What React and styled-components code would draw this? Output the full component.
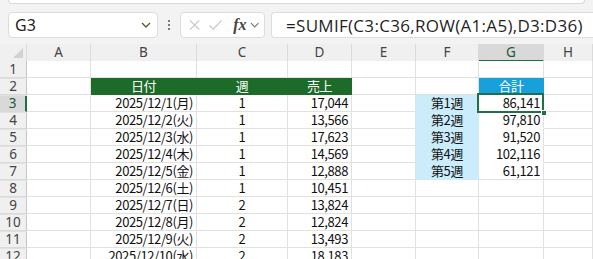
import React from "react";
import styled, { createGlobalStyle } from "styled-components";

const GlobalStyle = createGlobalStyle`
  html, body {
    margin: 0;
    padding: 0;
    background: #f3f3f3;
  }
  * {
    box-sizing: border-box;
  }
`;

const COLS = "27px 64px 106px 91px 64px 64px 63px 65px 1fr";
const CELL_FONT = `"Noto Sans CJK JP", "Noto Sans", sans-serif`;
const UI_FONT = `"Noto Sans", "Noto Sans CJK JP", sans-serif`;

const sales = [
  ["2025/12/1(月)", 1, "17,044"],
  ["2025/12/2(火)", 1, "13,566"],
  ["2025/12/3(水)", 1, "17,623"],
  ["2025/12/4(木)", 1, "14,569"],
  ["2025/12/5(金)", 1, "12,888"],
  ["2025/12/6(土)", 1, "10,451"],
  ["2025/12/7(日)", 2, "13,824"],
  ["2025/12/8(月)", 2, "12,824"],
  ["2025/12/9(火)", 2, "13,493"],
  ["2025/12/10(水)", 2, "18,183"],
];

const totals = [
  ["第1週", "86,141"],
  ["第2週", "97,810"],
  ["第3週", "91,520"],
  ["第4週", "102,116"],
  ["第5週", "61,121"],
];

function App() {
  const letters = ["A", "B", "C", "D", "E", "F", "G", "H"];

  return (
    <Root>
      <GlobalStyle />
      <RibbonEdge />
      <FormulaBar>
        <NameBox>
          <span>G3</span>
          <Chevron viewBox="0 0 10 6" $color="#5a5a2a">
            <path d="M1 1 L5 5 L9 1" />
          </Chevron>
        </NameBox>
        <Dots>
          <i />
          <i />
          <i />
        </Dots>
        <FxBox>
          <svg width="14" height="14" viewBox="0 0 14 14">
            <path d="M2 2 L12 12 M12 2 L2 12" stroke="#c4c4c4" strokeWidth="1.2" fill="none" />
          </svg>
          <svg width="16" height="14" viewBox="0 0 16 14">
            <path d="M1.5 7.5 L5.5 11.5 L14.5 2" stroke="#c4c4c4" strokeWidth="1.2" fill="none" />
          </svg>
          <Fx>fx</Fx>
          <Chevron viewBox="0 0 10 6" $color="#7a7a7a">
            <path d="M1 1 L5 5 L9 1" />
          </Chevron>
        </FxBox>
        <FormulaInput>=SUMIF(C3:C36,ROW(A1:A5),D3:D36)</FormulaInput>
      </FormulaBar>

      <Sheet>
        <Row>
          <Corner>
            <svg width="10" height="10" viewBox="0 0 10 10">
              <path d="M10 0 L10 10 L0 10 Z" fill="#d2d2d2" />
            </svg>
          </Corner>
          {letters.map((l) => (
            <ColHead key={l} $active={l === "G"}>
              {l}
            </ColHead>
          ))}
          <ColHead />
        </Row>

        {Array.from({ length: 12 }, (_, i) => {
          const r = i + 1;
          const d = r >= 3 ? sales[r - 3] : null;
          const t = r >= 3 && r <= 7 ? totals[r - 3] : null;
          return (
            <Row key={r}>
              <RowHead $active={r === 3}>{r}</RowHead>
              <Cell />
              {r === 2 ? (
                <>
                  <Cell $fill="#1d6b28" $align="center" $color="#fff">日付</Cell>
                  <Cell $fill="#1d6b28" $align="center" $color="#fff">週</Cell>
                  <Cell $fill="#1d6b28" $align="center" $color="#fff">売上</Cell>
                </>
              ) : (
                <>
                  <Cell $align="right">{d && d[0]}</Cell>
                  <Cell $align="center">{d && d[1]}</Cell>
                  <Cell $align="right">{d && d[2]}</Cell>
                </>
              )}
              <Cell />
              {t ? (
                <Cell $fill="#cbecfa" $align="center">{t[0]}</Cell>
              ) : (
                <Cell />
              )}
              {r === 2 ? (
                <Cell $fill="#17a0da" $align="center" $color="#fff">合計</Cell>
              ) : t ? (
                <SpillCell $align="right" $last={r === 7}>
                  {r === 3 && (
                    <>
                      <SpillOutline />
                      <ActiveCell>
                        <Handle />
                      </ActiveCell>
                    </>
                  )}
                  {t[1]}
                </SpillCell>
              ) : (
                <Cell />
              )}
              <Cell />
              <Cell />
            </Row>
          );
        })}
      </Sheet>
    </Root>
  );
}

const Root = styled.div`
  width: 593px;
  height: 259px;
  overflow: hidden;
  background: #f3f3f3;
  display: flex;
  flex-direction: column;
`;

const RibbonEdge = styled.div`
  flex: none;
  height: 4px;
  margin: 0 8px;
  background: #fff;
  border: 1px solid #d9d9d9;
  border-top: none;
  border-radius: 0 0 6px 6px;
`;

const FormulaBar = styled.div`
  flex: none;
  height: 40px;
  display: flex;
  align-items: center;
  padding: 2px 0 0 8px;
`;

const NameBox = styled.div`
  width: 150px;
  height: 26px;
  background: #fff;
  border: 1px solid #dcdcdc;
  border-radius: 4px;
  display: flex;
  align-items: center;
  justify-content: space-between;
  padding: 0 6px 0 6px;
  font-family: ${UI_FONT};
  font-size: 16px;
  color: #1f1f1f;
`;

const Chevron = styled.svg`
  width: 10px;
  height: 6px;
  fill: none;
  stroke: ${(p) => p.$color};
  stroke-width: 1.3;
`;

const Dots = styled.div`
  width: 22px;
  display: flex;
  flex-direction: column;
  align-items: center;
  gap: 2px;

  i {
    width: 2px;
    height: 2px;
    background: #555;
    border-radius: 1px;
  }
`;

const FxBox = styled.div`
  width: 85px;
  height: 26px;
  background: #fff;
  border: 1px solid #dcdcdc;
  border-radius: 4px;
  display: flex;
  align-items: center;
  gap: 7px;
  padding: 0 5px 0 7px;
`;

const Fx = styled.span`
  font-family: "Liberation Serif", serif;
  font-style: italic;
  font-weight: bold;
  font-size: 16px;
  color: #444;
  margin-left: 3px;
  margin-right: -4px;
`;

const FormulaInput = styled.div`
  flex: 1;
  height: 26px;
  margin-left: 6px;
  background: #fff;
  border: 1px solid #dcdcdc;
  border-right: none;
  border-radius: 4px 0 0 4px;
  display: flex;
  align-items: center;
  padding-left: 14px;
  font-family: "Open Sans", sans-serif;
  font-size: 17px;
  letter-spacing: 0.3px;
  color: #1f1f1f;
  white-space: nowrap;
  overflow: hidden;
`;

const Sheet = styled.div`
  flex: 1;
  min-height: 0;
  overflow: hidden;
  background: #fff;
  display: flex;
  flex-direction: column;
`;

const Row = styled.div`
  display: grid;
  grid-template-columns: ${COLS};
  height: 17px;
  flex: none;
`;

const Corner = styled.div`
  background: #f0f0f0;
  border-right: 1px solid #dadada;
  border-bottom: 1px solid #bdbdbd;
  display: flex;
  align-items: flex-end;
  justify-content: flex-end;
  padding: 0 3px 3px 0;
`;

const ColHead = styled.div`
  background: ${(p) => (p.$active ? "#d9d9d9" : "#f0f0f0")};
  border-right: 1px solid #dadada;
  border-bottom: ${(p) => (p.$active ? "2px solid #1e7145" : "1px solid #bdbdbd")};
  font-family: ${UI_FONT};
  font-size: 13.5px;
  line-height: 16px;
  color: ${(p) => (p.$active ? "#1e5a36" : "#444")};
  text-align: center;
`;

const RowHead = styled.div`
  background: ${(p) => (p.$active ? "#d9d9d9" : "#f0f0f0")};
  border-right: ${(p) => (p.$active ? "2px solid #1e7145" : "1px solid #c6c6c6")};
  border-bottom: 1px solid #dadada;
  font-family: ${UI_FONT};
  font-size: 13.5px;
  line-height: 16px;
  color: ${(p) => (p.$active ? "#1e5a36" : "#444")};
  text-align: center;
`;

const Cell = styled.div`
  position: relative;
  background: ${(p) => p.$fill || "#fff"};
  border-right: 1px solid ${(p) => p.$fill || "#e1e1e1"};
  border-bottom: 1px solid ${(p) => p.$fill || "#e1e1e1"};
  font-family: ${CELL_FONT};
  font-size: 13px;
  letter-spacing: -0.4px;
  line-height: 16px;
  color: ${(p) => p.$color || "#111"};
  text-align: ${(p) => p.$align || "left"};
  padding: 0 3px;
  white-space: nowrap;
`;

const SpillCell = styled(Cell)`
  border-bottom-color: ${(p) => (p.$last ? "#e1e1e1" : "#fff")};
`;

const SpillOutline = styled.div`
  position: absolute;
  left: -1px;
  top: -1px;
  width: 65px;
  height: 86px;
  border: 1px solid #4a6db8;
  pointer-events: none;
`;

const ActiveCell = styled.div`
  position: absolute;
  left: -2px;
  top: -2px;
  width: 67px;
  height: 20px;
  border: 2px solid #1e7145;
  z-index: 2;
`;

const Handle = styled.div`
  position: absolute;
  right: -5px;
  bottom: -5px;
  width: 6px;
  height: 6px;
  background: #1e7145;
  border: 1px solid #fff;
`;

export default App;
